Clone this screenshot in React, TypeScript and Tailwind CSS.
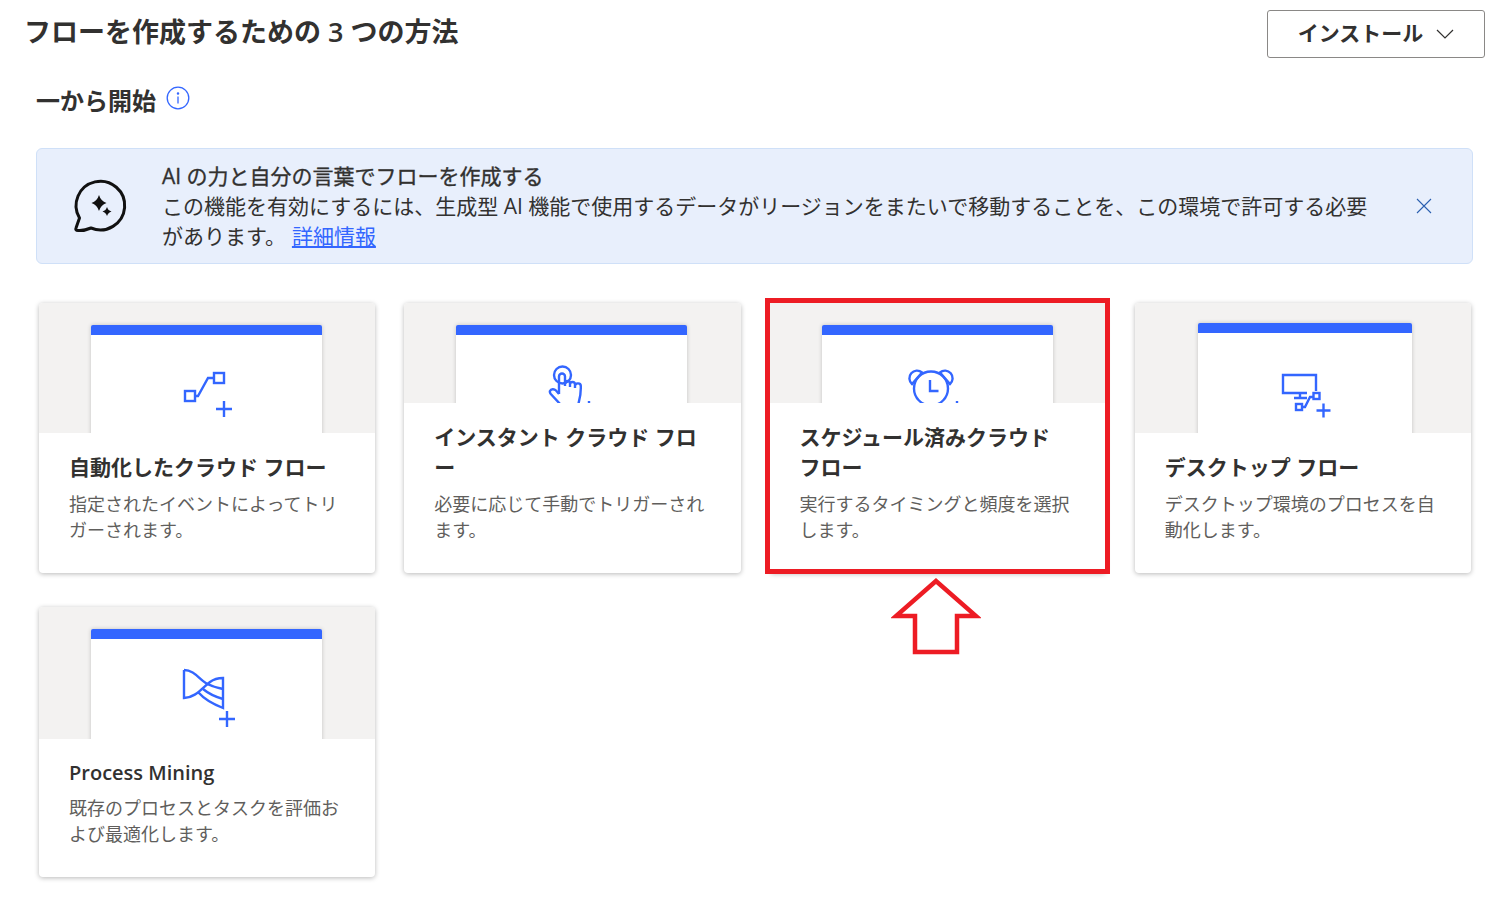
import React from 'react';

const BLUE = '#3366ff';

const Plus = ({ x, y, r = 8 }: { x: number; y: number; r?: number }) => (
  <path d={`M${x - r} ${y}h${r * 2}M${x} ${y - r}v${r * 2}`} />
);

const AutoIcon = () => (
  <>
    <rect x="10" y="28" width="10" height="10" />
    <rect x="39" y="10" width="10" height="10" />
    <path d="M20 33h3l10-18h6" />
    <Plus x={49} y={46} />
  </>
);

const HandIcon = () => (
  <>
    <circle cx="22.5" cy="12" r="8.5" />
    <path d="M19 31V13.5a3 3 0 0 1 6 0V23" />
    <path d="M25 20.5a2.5 2.5 0 0 1 5 0V24M30 21.5a2.5 2.5 0 0 1 5 0V25M35 23a2.8 2.8 0 0 1 5.8 .5C41 30 40 36 38 42" />
    <path d="M19 31l-3-3.5c-2-2-5-1.6-6 .5-.4 1 0 2 .8 3L21 42" />
    <Plus x={49} y={46} />
  </>
);

const AlarmIcon = () => (
  <>
    <circle cx="26" cy="25.500" r="17" />
    <path d="M25 17v11h8.500" />
    <path d="M7 21a7.500 7.500 0 0 1 10-11.500zM45 21a7.500 7.500 0 0 0-10-11.500z" />
    <Plus x={52} y={46} />
  </>
);

const DesktopIcon = () => (
  <>
    <path d="M43 28V12H10v18h24" />
    <path d="M27 30v5M21 35h13" />
    <rect x="23" y="41" width="6" height="6" />
    <rect x="40.500" y="30" width="6" height="6" />
    <path d="M29 44h3l5-10h3.500" />
    <Plus x={50.500} y={47.500} r={7} />
  </>
);

const ProcessIcon = () => (
  <>
    <path d="M9 3V31C20 31 27 21 35 15C39 12 44 11 48 11V41C38 37 30 33 24 26" />
    <path d="M9 3C21 3 25 15 35 18C39 20 44 21 48 22" />
    <path d="M28 22C34 27 41 30 48 32" />
    <Plus x={52} y={52} />
  </>
);

type CardProps = {
  title: string;
  desc: string;
  icon: React.ReactNode;
  twoLine?: boolean;
  narrow?: boolean;
  latin?: boolean;
};

const Card = ({ title, desc, icon, twoLine, narrow, latin }: CardProps) => (
  <div className="h-[270px] rounded-[4px] bg-white shadow-[0_1px_5px_rgba(0,0,0,0.28)] overflow-hidden flex flex-col">
    <div className={`shrink-0 bg-[#f3f2f1] overflow-hidden flex justify-center ${twoLine ? 'h-[100px]' : latin ? 'h-[132px]' : 'h-[130px]'}`}>
      <div className={`h-[200px] bg-white border-t-[10px] border-[#3366ff] rounded-t-[2px] shadow-[0_0_4px_rgba(0,0,0,0.2)] ${narrow ? 'w-[214px] mt-[20px] ml-[4px]' : 'w-[231px] mt-[22px] mr-[1px]'}`}>
        <svg
          viewBox="0 0 64 64"
          fill="none"
          stroke={BLUE}
          strokeWidth="2.4"
          className={`w-16 h-16 mx-auto ${narrow ? 'mt-[30px]' : 'mt-[28px]'}`}
        >
          {icon}
        </svg>
      </div>
    </div>
    <div className="px-[30px] pt-[19px]">
      <h3 className={`leading-[30px] text-[#323130] ${latin ? 'text-[20px] font-semibold' : 'text-[21px] font-semibold'}`}>{title}</h3>
      <p className={`text-[18px] leading-[26px] text-[#605e5c] ${latin ? 'mt-[7px]' : 'mt-[9px]'}`}>{desc}</p>
    </div>
  </div>
);

export default function App() {
  return (
    <div
      className="relative w-[1499px] h-[898px] bg-white overflow-hidden text-[#323130]"
      style={{ fontFamily: '"Open Sans", "Noto Sans CJK JP", sans-serif' }}
    >
      <div className="flex justify-between items-start pl-[24px] pr-[14px] pt-[10px]">
        <h1 className="text-[27px] leading-[44px] font-semibold">フローを作成するための 3 つの方法</h1>
        <button className="w-[218px] h-[48px] border border-[#8a8886] rounded-[3px] flex items-center justify-center gap-[13px] text-[21px] font-semibold bg-white">
          インストール
          <svg viewBox="0 0 18 10" fill="none" stroke="#323130" strokeWidth="1.200" className="w-[18px] h-[10px]">
            <path d="M1 1l8 8 8-8" />
          </svg>
        </button>
      </div>

      <div className="pl-[36px] mt-[18px] flex items-start gap-[10px] h-[50px]">
        <h2 className="text-[24px] leading-[50px] font-semibold">一から開始</h2>
        <svg viewBox="0 0 24 24" fill="none" stroke={BLUE} strokeWidth="1.300" className="w-[24px] h-[24px] mt-[10px]">
          <circle cx="12" cy="12" r="10.800" />
          <path d="M12 10.500v7" />
          <circle cx="12" cy="7.500" r=".6" fill={BLUE} />
        </svg>
      </div>

      <div className="ml-[36px] mt-[22px] w-[1437px] h-[116px] bg-[#e8effc] border border-[#cfe0f8] rounded-[6px] flex items-center">
        <svg viewBox="0 0 60 60" fill="none" stroke="#111" strokeWidth="3" className="w-[60px] h-[60px] ml-[32px] -mt-[2px] shrink-0">
          <path strokeLinejoin="round" d="M10.500 43A24.300 24.300 0 1 1 22 53Q15 56 9 55.500Q6 55.500 7 53Z" />
          <path fill="#111" stroke="none" d="M30 20q1.800 6 7.500 8q-5.700 2-7.500 8q-1.800-6-7.500-8q5.700-2 7.500-8z" />
          <path fill="#111" stroke="none" d="M38 32q1 3.500 4.500 4.500q-3.500 1-4.500 4.500q-1-3.500-4.500-4.500q3.500-1 4.500-4.500z" />
        </svg>
        <div className="ml-[33px] w-[1212px] text-[21px] leading-[30px] text-[#323130]">
          <div className="[-webkit-text-stroke:0.35px_#323130]">AI の力と自分の言葉でフローを作成する</div>
          <div>
            この機能を有効にするには、生成型 AI 機能で使用するデータがリージョンをまたいで移動することを、この環境で許可する必要があります。
            <a className="ml-[6px] text-[#3366ff] underline">詳細情報</a>
          </div>
        </div>
        <svg viewBox="0 0 16 16" fill="none" stroke="#2b5fb0" strokeWidth="1.100" className="w-[16px] h-[16px] ml-[42px]">
          <path d="M1 1l14 14M15 1L1 15" />
        </svg>
      </div>

      <div className="mt-[39px] ml-[39px] w-[1432px] grid grid-cols-4 gap-x-[29px] gap-y-[34px]">
        <Card title="自動化したクラウド フロー" desc="指定されたイベントによってトリガーされます。" icon={<AutoIcon />} />
        <Card title="インスタント クラウド フロー" desc="必要に応じて手動でトリガーされます。" icon={<HandIcon />} twoLine />
        <Card title="スケジュール済みクラウド フロー" desc="実行するタイミングと頻度を選択します。" icon={<AlarmIcon />} twoLine />
        <Card title="デスクトップ フロー" desc="デスクトップ環境のプロセスを自動化します。" icon={<DesktopIcon />} narrow />
        <Card title="Process Mining" desc="既存のプロセスとタスクを評価および最適化します。" icon={<ProcessIcon />} latin />
      </div>

      {/* annotation over the screenshot */}
      <div className="absolute left-[765px] top-[298px] w-[345px] h-[276px] border-[5px] border-[#ed1c24]" />
      <svg viewBox="0 0 90 80" fill="none" stroke="#ed1c24" strokeWidth="4.500" className="absolute left-[891px] top-[576px] w-[90px] h-[80px]">
        <path d="M45 5L5 40H24V76H66V40H85Z" />
      </svg>
    </div>
  );
}
